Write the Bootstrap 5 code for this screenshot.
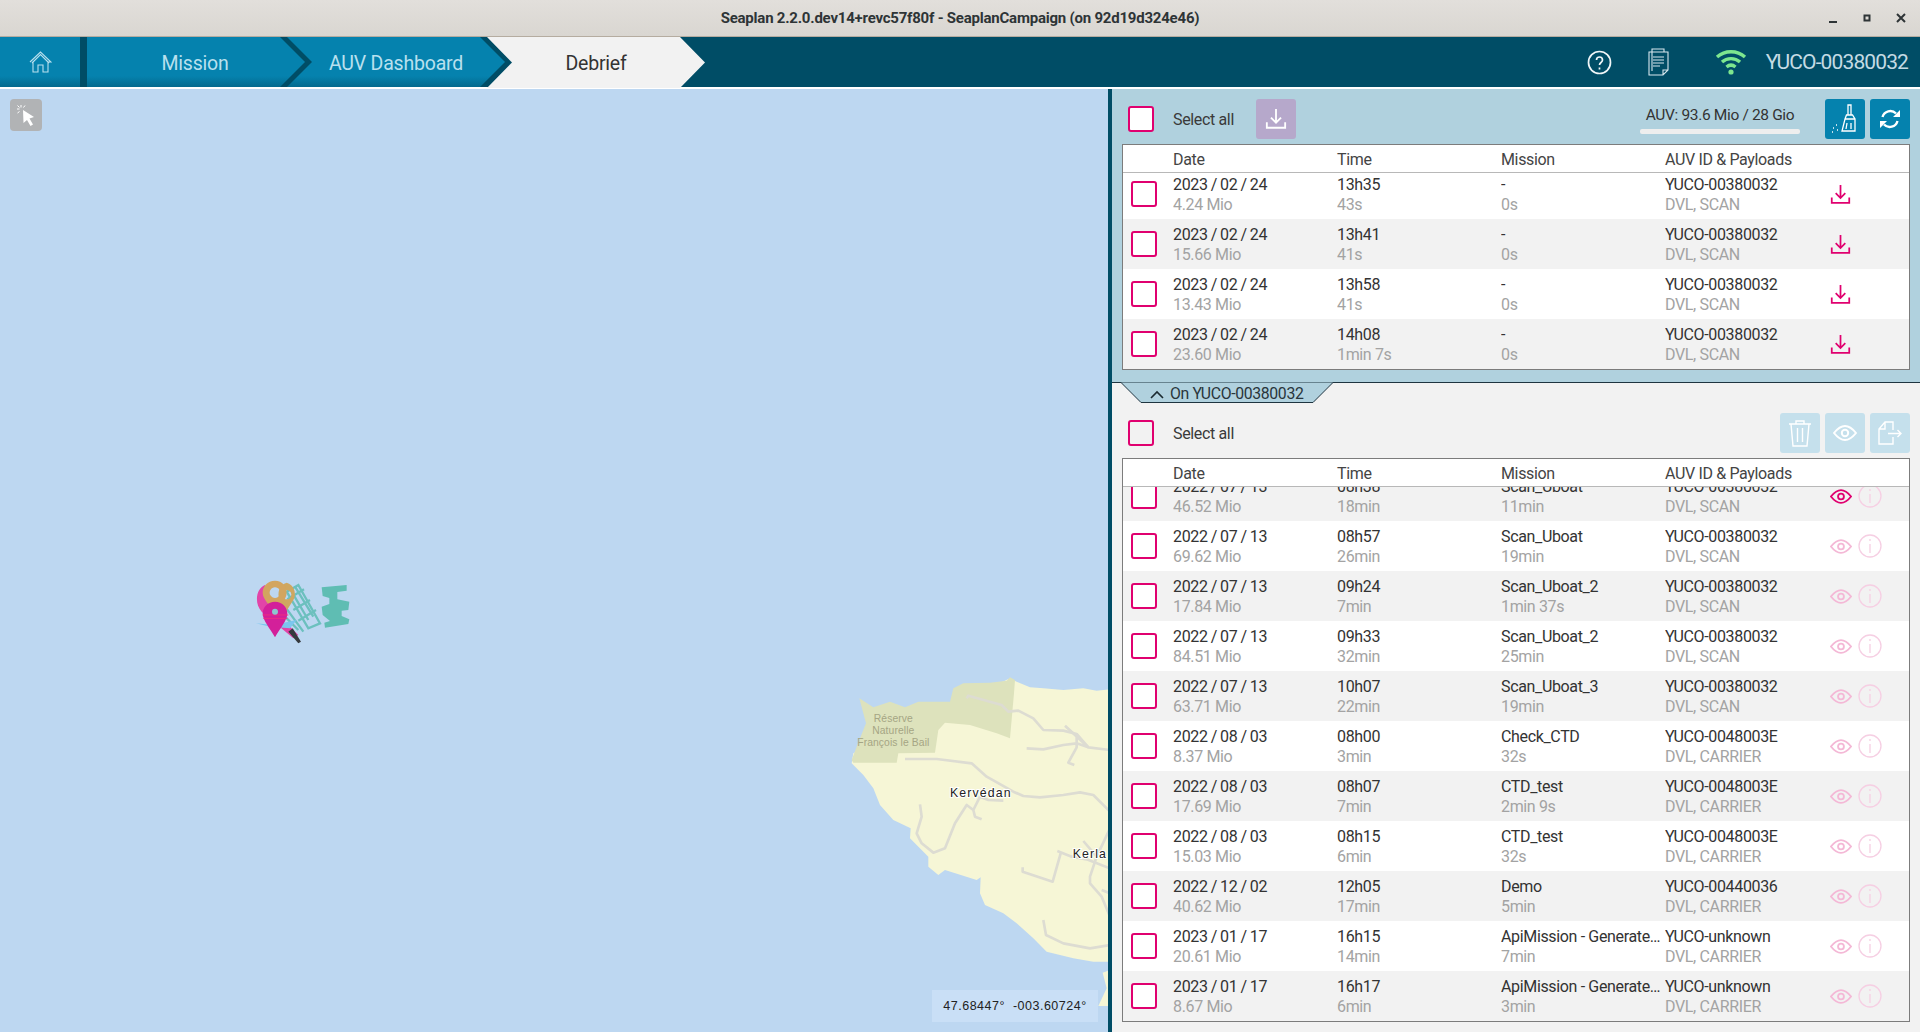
<!DOCTYPE html>
<html>
<head>
  <meta charset="utf-8">
  <title>Seaplan</title>
  <link rel="stylesheet" href="https://cdn.jsdelivr.net/npm/bootstrap@5.3.0/dist/css/bootstrap.min.css">
  <style>
    html, body { height: 100%; overflow: hidden; }
    body { font-family: "Roboto", "Liberation Sans", sans-serif; font-size: 16px; letter-spacing: -.35px; color: #333; background: #f2f2f2; }

    .title-bar { height: 37px; background: linear-gradient(#e2dfdb, #d9d6d1); border-bottom: 1px solid #b5aca0; position: relative; }
    .title-text { font-weight: 700; font-size: 15px; color: #2e3436; letter-spacing: -.22px; }
    .win-btns { position: absolute; right: 11px; top: 11px; gap: 19px; }

    .top-nav { height: 52px; background: linear-gradient(#004d66 50px, #fff 50px); }
    .step { height: 50px; background: linear-gradient(#0582ae 78%, #036a8e); color: #b9e0ee; font-size: 19.500px; letter-spacing: -.2px; display: flex; align-items: center; justify-content: center; padding-top: 3px; }
    .step-home { width: 80px; margin-right: 7px; padding-top: 0; }
    .step-mission { width: 218px; clip-path: polygon(0 0, 193px 0, 218px 50%, 193px 100%, 0 100%); padding-right: 2px; }
    .step-auv { width: 218px; margin-left: -18px; clip-path: polygon(0 0, 193px 0, 218px 50%, 193px 100%, 0 100%, 25px 50%); }
    .step-debrief { width: 218px; height: 51px; margin-left: -18px; background: #f2f2f2; color: #333; clip-path: polygon(0 0, 193px 0, 218px 50%, 193px 100%, 0 100%, 25px 50%); }
    .nav-right { height: 50px; }
    .nav-ic-doc { margin-left: 35px; }
    .nav-ic-wifi { margin-left: 41px; }
    .nav-auv { font-size: 21px; color: #c4dbe4; letter-spacing: -.88px; margin-left: 18px; margin-right: 12px; padding-top: 2px; }

    .main-area { height: 943px; }
    .map-pane { width: 1108px; background: #bdd7f1; position: relative; overflow: hidden; }
    .map-pane > svg { position: absolute; left: 0; top: -89px; }
    .cursor-btn { position: absolute; left: 10px; top: 10px; width: 32px; height: 32px; border-radius: 4px; background: #b1b3b5; }
    .coords { position: absolute; left: 932px; top: 901px; width: 166px; height: 32px; background: #c9dff6; font-family: "Liberation Sans", sans-serif; font-size: 12.500px; color: #222; letter-spacing: .5px; }

    .side-pane { width: 812px; border-left: 4px solid #004d66; background: #f2f2f2; }
    .auv-pane { height: 294px; padding-top: 10px; background: #b0d1de; border-bottom: 1px solid #1f3540; }
    .tool-row { height: 40px; padding-left: 16px; padding-right: 10px; }
    .tool-gap { gap: 5px; }
    .tool-btn { width: 40px; height: 40px; padding: 0; border: 0; border-radius: 3px; background: #0582ae; display: flex; align-items: center; justify-content: center; }
    .tool-btn.lilac { background: #b6a8cb; margin-left: 21px; }
    .tool-btn.pale { background: #c5e0ec; }
    .select-text { width: 62px; margin-left: 19px; padding-top: 2px; white-space: nowrap; color: #3a3a3a; }
    .form-check-input.pink-check { width: 26px; height: 26px; margin: 0; border: 2px solid #e0006f; border-radius: 3px; background-color: #fff; flex: none; }
    .form-check-input.pink-check.side { background-color: #f2f2f2; }
    .meter-box { width: 160px; margin-right: 25px; text-align: center; font-size: 15.500px; line-height: 20px; }
    .meter-track { height: 5px; margin-top: 4px; border-radius: 2px; background: #eeeeee; }

    .files-box { margin: 5px 10px 0; border: 1px solid #7c7c7c; background: #fff; }
    .files-box.top-box { height: 226px; }
    .files-box.low-box { height: 564px; }
    .files-head { height: 28px; background: #fff; border-bottom: 1px solid #b8b8b8; position: relative; z-index: 1; line-height: 29px; color: #444; }
    .files-body { overflow: hidden; }
    .top-box .files-body { height: 196px; }
    .low-box .files-body { height: 534px; }
    .top-box .files-list { margin-top: -4px; }
    .low-box .files-list { margin-top: -16px; background: #f2f2f2; }
    .file-line { height: 50px; background: #fff; }
    .file-line.zebra { background: #f2f2f2; }
    .cell-box { width: 34px; margin-left: 8px; flex: none; }
    .head-pad { width: 50px; flex: none; }
    .cell-col { width: 164px; flex: none; padding-top: 6px; height: 50px; padding-right: 2px; }
    .head-col { width: 164px; flex: none; }
    .cell-gap { width: 8px; flex: none; }
    .line-main { height: 20px; line-height: 20px; color: #333; }
    .line-sub { height: 20px; line-height: 20px; color: #a3a3a3; }
    .date-text { word-spacing: -.5px; }
    .row-icons { gap: 6px; margin-left: 1px; }
    .file-down { color: #e0006f; margin-left: 1px; }

    .drawer-tab { position: relative; width: 212px; height: 20px; margin-left: 9px; padding-left: 49px; line-height: 22px; font-size: 15.800px; color: #29353b; white-space: nowrap; }
    .drawer-tab svg.tab-shape { position: absolute; left: 0; top: -1px; }
    .drawer-tab svg.tab-chev { position: absolute; left: 29px; top: 7px; }
    .drawer-tab span { position: relative; }
    .low-tools { margin-top: 10px; }
  </style>
</head>
<body>
  <svg width="0" height="0" class="position-absolute">
    <defs>
      <symbol id="ic-download" viewBox="0 0 24 24"><path d="M12 1v15M6.500 10.500 12 16l5.500-5.500M2 15.500V21.500H22V15.500" fill="none" stroke="currentColor" stroke-width="2"/></symbol>
      <symbol id="ic-eye" viewBox="0 0 24 16"><path d="M1 8C5 3 8.500 1 12 1s7 2 11 7c-4 5-7.500 7-11 7S5 13 1 8Z" fill="none" stroke="currentColor" stroke-width="2"/><circle cx="12" cy="8" r="3.200" fill="none" stroke="currentColor" stroke-width="2"/></symbol>
      <symbol id="ic-info" viewBox="0 0 24 24"><circle cx="12" cy="12" r="11" fill="none" stroke="currentColor" stroke-width="1.300"/><path d="M12 10v9M12 5v2" fill="none" stroke="currentColor" stroke-width="1.300"/></symbol>
    </defs>
  </svg>

  <div class="title-bar d-flex align-items-center justify-content-center">
    <span class="title-text">Seaplan 2.2.0.dev14+revc57f80f - SeaplanCampaign (on 92d19d324e46)</span>
    <div class="win-btns d-flex">
      <svg width="15" height="15"><path d="M3 11h8" stroke="#2e3436" stroke-width="2"/></svg>
      <svg width="15" height="15"><rect x="4.500" y="4.500" width="5" height="5" fill="none" stroke="#2e3436" stroke-width="2"/></svg>
      <svg width="15" height="15"><path d="M3 3l8 8M11 3l-8 8" stroke="#2e3436" stroke-width="2"/></svg>
    </div>
  </div>

  <div class="top-nav d-flex align-items-start">
    <div class="step step-home">
      <svg width="23" height="22" viewBox="0 0 23 22" fill="none" stroke="#b9e0ee" stroke-width="1.100"><path d="M1 11 11.500 1 22 11h-3M4 11v10h5v-7h5v7h5V11M3 12 11.500 3.500 20 12"/></svg>
    </div>
    <div class="step step-mission">Mission</div>
    <div class="step step-auv">AUV Dashboard</div>
    <div class="step step-debrief">Debrief</div>
    <div class="nav-right ms-auto d-flex align-items-center">
      <svg width="25" height="25" viewBox="0 0 25 25" fill="none" stroke="#f0f6f8" stroke-width="1.700"><circle cx="12.500" cy="12.500" r="11"/><path d="M9.500 10c0-4 6-4 6 0 0 2.500-3 2.500-3 5M12.500 17.500v2"/></svg>
      <svg class="nav-ic-doc" width="26" height="30" viewBox="0 0 26 30" fill="none" stroke="#d8e8ee" stroke-width="1.100"><path d="M5 24V2h12v3M2 27V5h19v18l-5 5H2ZM16 28v-5h5M6 10h11M6 13h11M6 16h11M6 19h7"/></svg>
      <svg class="nav-ic-wifi" width="34" height="26" viewBox="0 0 34 26" fill="none" stroke="#7de68f" stroke-width="3.400"><path d="M3 8c8-7 20-7 28 0M8 13c5-4.500 13-4.500 18 0M12.500 18c3-2.500 6-2.500 9 0"/><circle cx="17" cy="23" r="2.600" fill="#7de68f" stroke="none"/></svg>
      <span class="nav-auv">YUCO-00380032</span>
    </div>
  </div>

  <div class="main-area d-flex">
    <div class="map-pane">
      <svg width="1108" height="1032" viewBox="0 0 1108 1032">
        <g transform="translate(830 660) scale(.33333)">
          <path fill="#f6f6d6" d="M540 55 560 65 600 82 640 85 700 90 760 85 800 92 840 88V905L790 905 730 895 650 875 610 835 560 790 520 760 465 735 450 700 452 652 440 660 345 630 325 645 295 620 295 590 240 535 242 505 190 480 150 435 130 385 100 345 65 310 70 280Z"/>
          <path fill="#f6f6d6" d="M840 930 818 938 830 985 805 1038H840Z"/>
          <path fill="#dde2bc" d="M88 115 130 142 180 125 225 142 265 125 360 125 370 85 400 70 480 68 530 62 540 52 555 60 552 100 540 235 500 220 420 195 345 188 325 210 315 278 205 280 200 308 70 308 65 300 80 260 108 190Z"/>
          <g fill="none" stroke-linejoin="round" stroke="#dddcd2" stroke-width="8">
            <path d="M410 115 415 107 515 135 535 155 565 152 610 175 640 210 700 212 740 222 775 262 840 270"/>
            <path d="M705 197 775 262M590 265 640 268 700 255 740 250 775 262M740 230 740 262 715 308 733 315"/>
            <path d="M225 297 320 297 425 310 470 350 550 395 580 408 630 412 700 405 750 397 790 405 840 455"/>
            <path d="M270 433 275 470 260 520 275 550 310 578 345 565 375 490 410 435 430 450 435 470 455 478M430 450 450 410 475 420 520 422"/>
            <path d="M682 573 725 590 770 598 840 625M692 580 668 665 578 635 578 622"/>
            <path d="M840 505 800 590 780 650 780 670 815 710 840 770M760 543 800 590M815 690 840 700"/>
            <path d="M640 780 648 825 700 850 780 865 840 855"/>
          </g>
          <g font-family="Liberation Sans, sans-serif" font-size="31" fill="#a5a584" text-anchor="middle" letter-spacing=".3">
            <text x="190" y="187">Réserve</text>
            <text x="190" y="223">Naturelle</text>
            <text x="190" y="259">François le Bail</text>
          </g>
          <g font-family="Liberation Sans, sans-serif" font-size="37" fill="#222" letter-spacing="3.400" stroke="#fff" stroke-width="6" paint-order="stroke">
            <text x="360" y="412">Kervédan</text>
            <text x="728" y="595">Kerla</text>
          </g>
        </g>
        <g transform="translate(230 560) scale(.33333)">
          <g fill="none" stroke="#6cc0be" stroke-width="7">
            <path d="M205 75 270 190 235 205 170 95Z"/>
            <path d="M185 95 235 180M222 88 172 118M240 120 190 150M258 150 205 182M195 80 250 170"/>
            <path d="M165 140 220 215M165 170 205 210"/>
          </g>
          <path fill="#5fbdb3" d="M275 82 350 75 350 92 322 96 322 118 358 125 355 150 335 152 335 168 358 178 355 192 285 203 283 188 300 183 278 165 275 140 298 132 298 114 278 108Z"/>
          <path fill="#e244a8" d="M105 75C78 85 72 130 95 155L190 235 205 225 175 195 150 190 120 120Z"/>
          <path fill="#35393d" d="M175 215 188 205 213 245 205 250Z"/>
          <path fill="#7cc6ef" d="M78 190 130 195 200 180 180 205 120 200Z"/>
          <path fill="#cfa760" fill-rule="evenodd" d="M170 68A36 36 0 0 1 190 120L165 160 150 120A36 36 0 0 1 170 68ZM170 90A14 14 0 1 0 170.100 90Z"/>
          <path fill="#d3a55f" fill-rule="evenodd" d="M135 62C158 62 170 80 170 98 170 118 150 135 135 160 120 135 98 118 98 98 98 80 112 62 135 62ZM135 82A16 16 0 1 0 135.100 82Z"/>
          <path fill="#d3209a" d="M135 125C156 125 172 142 172 160 172 182 150 205 135 232 120 205 98 182 98 160 98 142 114 125 135 125Z"/>
          <path fill="none" stroke="#ee2d84" stroke-width="3" d="M98 165H175M100 175H172"/>
          <circle cx="135" cy="155" r="9" fill="#8dc7cf"/>
        </g>
      </svg>
      <button class="cursor-btn btn p-0 border-0 d-flex align-items-center justify-content-center">
        <svg width="20" height="22" viewBox="0 0 20 22"><path d="M7 6 18 13 13.500 14.500 17 20.500 14.500 22 11 16 7.500 19Z" fill="#fff"/><path d="M5 1v2.500M1 5h2.500M1.500 1.500l2 2M1.500 9l2-1.500M9 1.500l-1.500 2" stroke="#fff" stroke-width="1"/></svg>
      </button>
      <div class="coords d-flex align-items-center justify-content-center">47.68447°&nbsp;&nbsp;-003.60724°</div>
    </div>

    <div class="side-pane">
      <div class="auv-pane">
        <div class="tool-row d-flex align-items-center">
          <input class="form-check-input pink-check" type="checkbox">
          <span class="select-text">Select all</span>
          <button class="tool-btn lilac text-white"><svg width="22" height="22"><use href="#ic-download"/></svg></button>
          <div class="meter-box ms-auto">AUV: 93.6 Mio / 28 Gio<div class="meter-track"></div></div>
          <div class="d-flex tool-gap">
            <button class="tool-btn">
              <svg width="30" height="32" viewBox="0 0 30 32" fill="none" stroke="#fff" stroke-width="1.300"><path d="M18 2h3v10h-3ZM16.500 12h6l2.500 4v12H12l3-12ZM15.500 16H25M17 20l-1 6M21 20v6M3 25h1M6 22h1M7 27h1M2 29h1"/></svg>
            </button>
            <button class="tool-btn">
              <svg width="24" height="24" viewBox="0 0 24 24" fill="none" stroke="#fff" stroke-width="2.400"><path d="M4.500 10a8 8 0 0 1 13.500-3.500M19.500 14a8 8 0 0 1-13.500 3.500"/><path d="M15 10h7V3ZM9 14H2v7Z" fill="#fff" stroke="none"/></svg>
            </button>
          </div>
        </div>
        <div class="files-box top-box">
          <div class="files-head d-flex">
            <div class="head-pad"></div><div class="head-col">Date</div><div class="head-col">Time</div><div class="head-col">Mission</div><div class="head-col">AUV ID &amp; Payloads</div>
          </div>
          <div class="files-body"><div class="files-list" id="auvFiles"></div></div>
        </div>
      </div>

      <div class="drawer-tab">
        <svg class="tab-shape" width="212" height="21"><path d="M0 0.500 20 20.500H192L212 0.500Z" fill="#b0d1de"/><path d="M0 0.500 20 20.500H192L212 0.500" fill="none" stroke="#1f3540"/></svg>
        <svg class="tab-chev" width="14" height="9"><path d="M1 8 7 2l6 6" fill="none" stroke="#1b2a30" stroke-width="1.600"/></svg>
        <span>On YUCO-00380032</span>
      </div>

      <div class="tool-row low-tools d-flex align-items-center">
        <input class="form-check-input pink-check side" type="checkbox">
        <span class="select-text">Select all</span>
        <div class="d-flex tool-gap ms-auto">
          <button class="tool-btn pale"><svg width="24" height="28" viewBox="0 0 24 28" fill="none" stroke="#fff" stroke-width="1.400"><path d="M1 5h22M8 5V2h8v3M3 5l2 22h14l2-22M9.500 9v14M14.500 9v14"/></svg></button>
          <button class="tool-btn pale"><svg width="24" height="16" style="color:#fff"><use href="#ic-eye"/></svg></button>
          <button class="tool-btn pale"><svg width="24" height="24" viewBox="0 0 24 24" fill="none" stroke="#fff" stroke-width="1.400"><path d="M15 9V1H7L1 8v15h14v-7M7 1v7H1M10 12.500h13M19.500 9l3.500 3.500-3.500 3.500"/></svg></button>
        </div>
      </div>
      <div class="files-box low-box">
        <div class="files-head d-flex">
          <div class="head-pad"></div><div class="head-col">Date</div><div class="head-col">Time</div><div class="head-col">Mission</div><div class="head-col">AUV ID &amp; Payloads</div>
        </div>
        <div class="files-body"><div class="files-list" id="localFiles"></div></div>
      </div>
    </div>
  </div>

  <script src="https://cdn.jsdelivr.net/npm/bootstrap@5.3.0/dist/js/bootstrap.bundle.min.js"></script>
  <script>
    const auvFiles = [
      ['2023 / 02 / 24', '4.24 Mio', '13h35', '43s', '-', '0s', 'YUCO-00380032', 'DVL, SCAN'],
      ['2023 / 02 / 24', '15.66 Mio', '13h41', '41s', '-', '0s', 'YUCO-00380032', 'DVL, SCAN'],
      ['2023 / 02 / 24', '13.43 Mio', '13h58', '41s', '-', '0s', 'YUCO-00380032', 'DVL, SCAN'],
      ['2023 / 02 / 24', '23.60 Mio', '14h08', '1min 7s', '-', '0s', 'YUCO-00380032', 'DVL, SCAN']
    ];
    const localFiles = [
      ['2022 / 07 / 13', '46.52 Mio', '08h38', '18min', 'Scan_Uboat', '11min', 'YUCO-00380032', 'DVL, SCAN'],
      ['2022 / 07 / 13', '69.62 Mio', '08h57', '26min', 'Scan_Uboat', '19min', 'YUCO-00380032', 'DVL, SCAN'],
      ['2022 / 07 / 13', '17.84 Mio', '09h24', '7min', 'Scan_Uboat_2', '1min 37s', 'YUCO-00380032', 'DVL, SCAN'],
      ['2022 / 07 / 13', '84.51 Mio', '09h33', '32min', 'Scan_Uboat_2', '25min', 'YUCO-00380032', 'DVL, SCAN'],
      ['2022 / 07 / 13', '63.71 Mio', '10h07', '22min', 'Scan_Uboat_3', '19min', 'YUCO-00380032', 'DVL, SCAN'],
      ['2022 / 08 / 03', '8.37 Mio', '08h00', '3min', 'Check_CTD', '32s', 'YUCO-0048003E', 'DVL, CARRIER'],
      ['2022 / 08 / 03', '17.69 Mio', '08h07', '7min', 'CTD_test', '2min 9s', 'YUCO-0048003E', 'DVL, CARRIER'],
      ['2022 / 08 / 03', '15.03 Mio', '08h15', '6min', 'CTD_test', '32s', 'YUCO-0048003E', 'DVL, CARRIER'],
      ['2022 / 12 / 02', '40.62 Mio', '12h05', '17min', 'Demo', '5min', 'YUCO-00440036', 'DVL, CARRIER'],
      ['2023 / 01 / 17', '20.61 Mio', '16h15', '14min', 'ApiMission - Generated mission', '7min', 'YUCO-unknown', 'DVL, CARRIER'],
      ['2023 / 01 / 17', '8.67 Mio', '16h17', '6min', 'ApiMission - Generated mission', '3min', 'YUCO-unknown', 'DVL, CARRIER']
    ];

    const cell = (a, b, extra = '') =>
      `<div class="cell-col"><div class="line-main text-truncate ${extra}">${a}</div><div class="line-sub text-truncate">${b}</div></div>`;

    function fileRow(f, zebra, icons) {
      return `<div class="file-line d-flex align-items-center ${zebra ? 'zebra' : ''}">
        <div class="cell-box d-flex align-items-center"><input class="form-check-input pink-check" type="checkbox"></div>
        <div class="cell-gap"></div>
        ${cell(f[0], f[1], 'date-text')}${cell(f[2], f[3])}${cell(f[4], f[5])}${cell(f[6], f[7])}
        ${icons}
      </div>`;
    }

    document.getElementById('auvFiles').innerHTML = auvFiles.map((f, i) =>
      fileRow(f, i % 2 === 1, '<svg class="file-down" width="21" height="21"><use href="#ic-download"/></svg>')).join('');

    document.getElementById('localFiles').innerHTML = localFiles.map((f, i) => {
      const eye = i === 0 ? '#e0006f' : '#f4b8d6';
      return fileRow(f, i % 2 === 0,
        `<div class="row-icons d-flex align-items-center">
          <svg width="22" height="15" style="color:${eye}"><use href="#ic-eye"/></svg>
          <svg width="24" height="24" style="color:#f6cfe3"><use href="#ic-info"/></svg>
        </div>`);
    }).join('');
  </script>
</body>
</html>
